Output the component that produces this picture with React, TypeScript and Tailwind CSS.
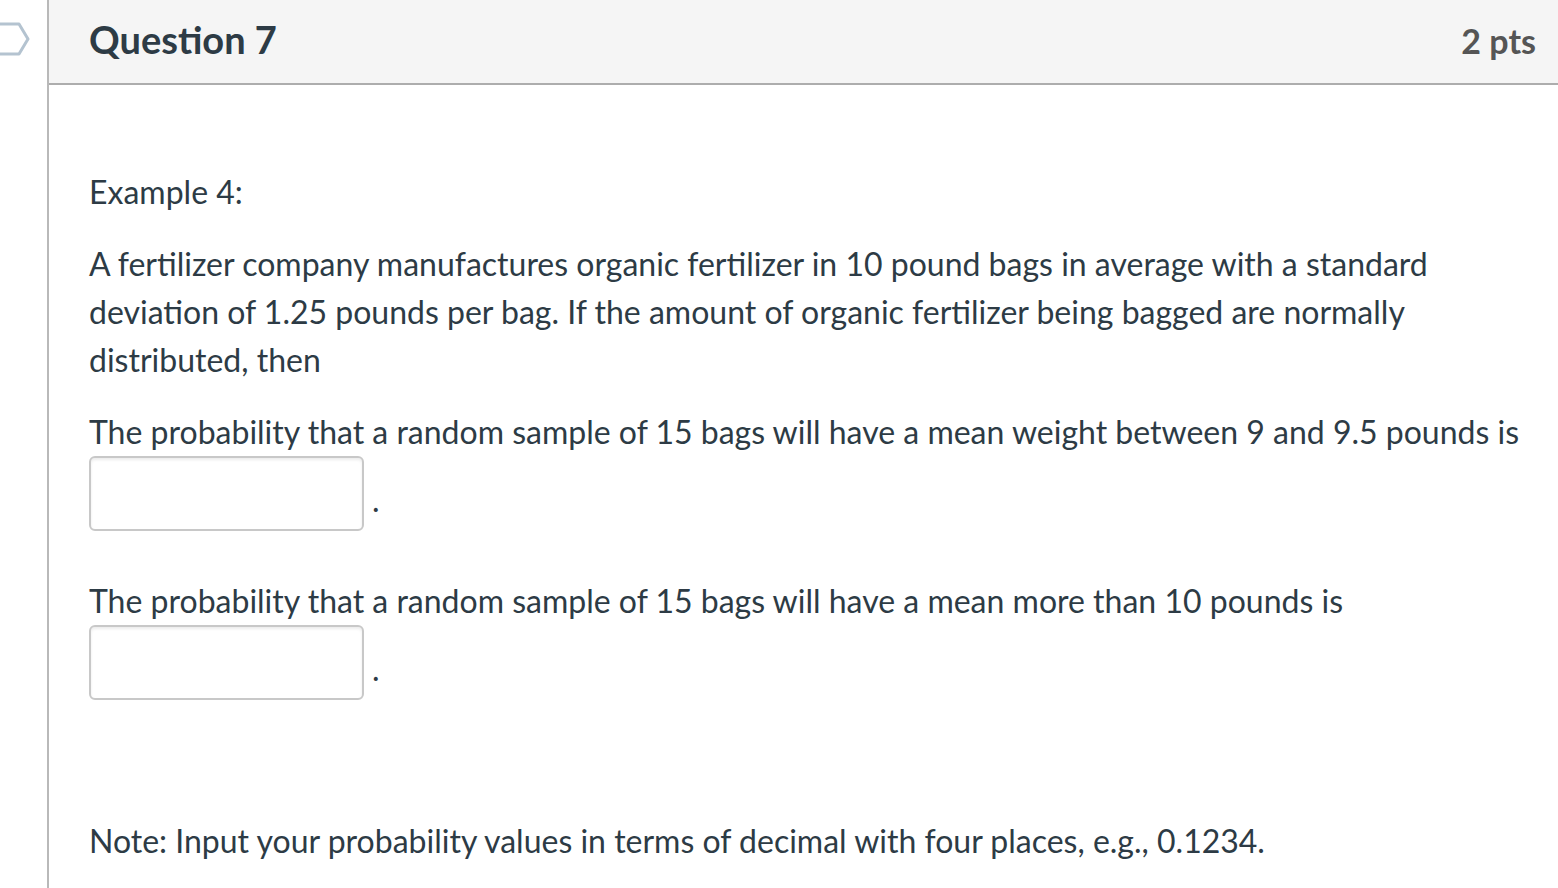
export default function App() {
    return (
        <div className="flex h-[888px] w-[1558px] overflow-hidden bg-white font-['Lato','Noto_Sans',sans-serif] text-[#2d3b45]">
            {/* Left gutter with question marker */}
            <div className="relative w-[47px] shrink-0">
                <svg className="absolute left-0 top-[22px]" width="30" height="34" viewBox="0 0 30 34">
                    <path d="M-4 2 H19 L28 17 L19 32 H-4" fill="none" stroke="#b4c3d0" strokeWidth="3" strokeLinejoin="round" />
                </svg>
            </div>

            <div className="flex flex-1 flex-col border-l-2 border-[#b9b9b9]">
                <div className="flex h-[85px] items-center justify-between border-b-2 border-[#adadad] bg-[#f5f5f5] pl-[40px] pr-[22px]">
                    <h2 className="mb-[4px] text-[38px] font-bold text-[#2d3b45]">Question 7</h2>
                    <span className="mb-[2px] text-[34px] font-bold text-[#555555]">2 pts</span>
                </div>

                <div className="pl-[40px] pt-[83px] text-[32px] leading-[48px]">
                    <p>Example 4:</p>
                    <p className="mt-[24px] pr-[100px]">
                        A fertilizer company manufactures organic fertilizer in 10 pound bags in average with a standard deviation of 1.25 pounds per bag. If the amount of organic fertilizer being bagged are normally distributed, then
                    </p>
                    <p className="mt-[24px]">
                        The probability that a random sample of 15 bags will have a mean weight between 9 and 9.5 pounds is
                    </p>
                    <div className="flex items-end">
                        <div className="h-[75px] w-[275px] rounded-[6px] border-2 border-[#c8c8c8] bg-white shadow-[inset_0_2px_3px_rgba(0,0,0,0.08)]" />
                        <span className="mb-[13px] ml-[8px] leading-[36px]">.</span>
                    </div>
                    <p className="mt-[46px]">
                        The probability that a random sample of 15 bags will have a mean more than 10 pounds is
                    </p>
                    <div className="flex items-end">
                        <div className="h-[75px] w-[275px] rounded-[6px] border-2 border-[#c8c8c8] bg-white shadow-[inset_0_2px_3px_rgba(0,0,0,0.08)]" />
                        <span className="mb-[13px] ml-[8px] leading-[36px]">.</span>
                    </div>
                    <p className="mt-[117px]">
                        Note: Input your probability values in terms of decimal with four places, e.g., 0.1234.
                    </p>
                </div>
            </div>
        </div>
    );
}
